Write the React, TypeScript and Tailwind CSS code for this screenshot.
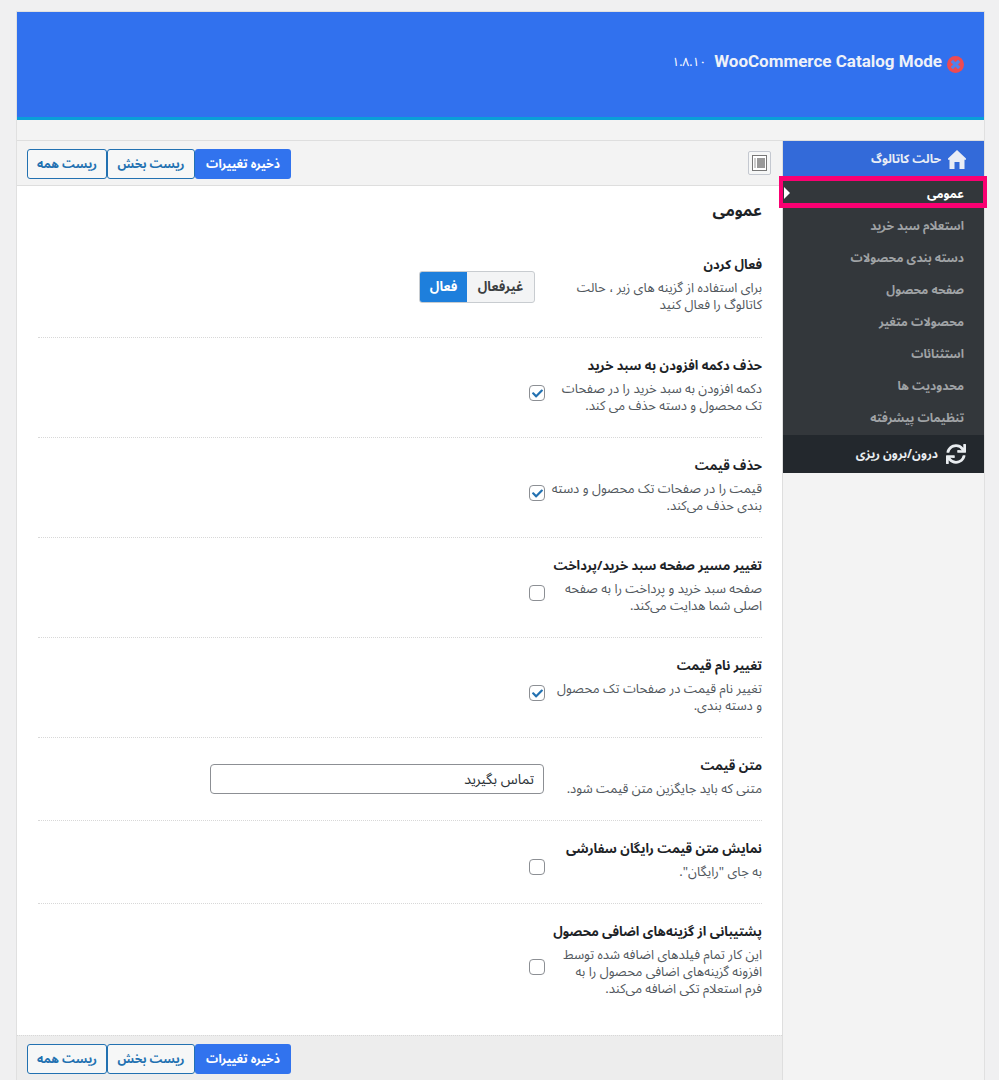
import { FaSync, FaCheck } from "react-icons/fa";

const font = "font-['Noto_Sans','Noto_Sans_Arabic','DejaVu_Sans',sans-serif]";

const menuItems = [
  "استعلام سبد خرید",
  "دسته بندی محصولات",
  "صفحه محصول",
  "محصولات متغیر",
  "استثنائات",
  "محدودیت ها",
  "تنظیمات پیشرفته",
];

const Buttons = () => (
  <div className="flex flex-row-reverse">
    <button className="h-[30px] w-[80px] rounded-[3px] border border-[#2271b1] bg-[#f6f7f7] text-[12px] font-bold text-[#2271b1]">
      ریست همه
    </button>
    <button className="h-[30px] w-[88px] rounded-[3px] border border-[#2271b1] bg-[#f6f7f7] text-[12px] font-bold text-[#2271b1]">
      ریست بخش
    </button>
    <button className="h-[30px] w-[96px] rounded-[3px] bg-[#3173ee] text-[12px] font-bold text-white">
      ذخیره تغییرات
    </button>
  </div>
);

const Check = ({ checked, top }: { checked?: boolean; top: string }) => (
  <div className={`${top} flex h-4 w-4 items-center justify-center rounded-[4px] border border-[#8c8f94] bg-white`}>
    {checked && <FaCheck className="text-[11px] text-[#2271b1]" />}
  </div>
);

const Row = ({
  title,
  desc,
  height,
  children,
}: {
  title: string;
  desc: string[];
  height: string;
  children?: React.ReactNode;
}) => (
  <div className={`${height} flex border-b border-dotted border-[#d8d8d8] pt-[15px] last:border-b-0`}>
    <div className="w-[217px] shrink-0">
      <h4 className="whitespace-nowrap text-[13px] font-bold leading-6 text-[#1d2327]">{title}</h4>
      <p className="mt-[3px] text-[13px] leading-[17px] text-[#51575d]">
        {desc.map((d) => (
          <span key={d} className="block whitespace-nowrap">
            {d}
          </span>
        ))}
      </p>
    </div>
    {children}
  </div>
);

export default function App() {
  return (
    <div dir="rtl" className={`${font} h-[1080px] overflow-hidden bg-[#f0f0f1] pl-4 pr-[14px] pt-[11px]`}>
      <div className="border border-[#e0e0e0] bg-[#f3f3f3]">
        <div className="flex h-[108px] items-center border-b-[3px] border-[#0a9fd8] bg-[#3171ee] pb-[6px] pr-[20px] text-white">
          <svg viewBox="0 0 16 16" className="mt-[6px] h-[17px] w-[17px] shrink-0">
            <circle cx="8" cy="8" r="8" fill="#ee4a52" />
            <path d="M4.500 4.500l7 7M11.500 4.500l-7 7" stroke="#4f83ee" strokeWidth="3" />
          </svg>
          <span dir="ltr" className="mr-[5px] font-['Roboto',sans-serif] text-[17px] font-bold text-[#eef1f8]">
            WooCommerce Catalog Mode
          </span>
          <span className="mr-[8px] text-[12px]">۱.۸.۱۰</span>
        </div>
        <div className="h-[21px] border-b border-[#dedede]" />
        <div className="flex">
          <aside className="w-[201px] shrink-0 bg-[#f3f3f3]">
            <div className="flex h-[36px] items-center gap-[7px] bg-[#336ad9] pr-[18px] text-[12px] font-bold text-[#e9edf5]">
              <svg viewBox="0 0 18 19" className="h-[19px] w-[18px] fill-current">
                <path d="M9 0l9 8.500v1.300h-1.500V19h-5v-7h-5v7h-5V9.800H0V8.500z" />
              </svg>
              حالت کاتالوگ
            </div>
            <div className="bg-[#33373b] pb-[2px]">
              <div className="relative flex h-[32px] items-center pr-[20px] pt-[2px] text-[12px] font-bold text-white">
                عمومی
                <span className="absolute left-[1px] top-[10px] h-0 w-0 border-y-[6px] border-l-[6px] border-y-transparent border-l-white" />
                <span className="absolute -left-[4px] -right-[3px] -top-px h-[32px] border-x-4 border-y-[5px] border-[#fa0072]" />
              </div>
              {menuItems.map((item) => (
                <div key={item} className="flex h-[32px] items-center pr-[20px] pt-[2px] text-[12px] font-bold text-[#a0a3a6]">
                  {item}
                </div>
              ))}
            </div>
            <div className="flex h-[38px] items-center gap-[8px] bg-[#23282d] pr-[18px] text-[12px] font-bold text-[#e9edf0]">
              <FaSync className="text-[20px]" />
              درون/برون ریزی
            </div>
          </aside>
          <main className="min-w-0 flex-1 border-r border-[#dedede] bg-white">
            <div className="flex h-[45px] items-start justify-between border-b border-[#dedede] bg-[#f3f3f3] pl-[10px] pr-[11px] pt-[8px]">
              <div className="mt-[2px] flex h-[24px] w-[23px] items-center justify-center rounded-[2px] border border-[#c4c8d0] bg-[#f6f7f7]">
                <div className="flex h-[16px] w-[15px] flex-row-reverse gap-px border border-[#777] bg-white px-px pb-[2px] pt-[2px]">
                  <div className="w-[2px] bg-[#ccc]" />
                  <div className="flex-1 bg-[#999]" />
                </div>
              </div>
              <Buttons />
            </div>
            <div className="h-[849px] pl-[21px] pr-[20px]">
              <h3 className="pt-[12px] text-[16px] font-bold leading-6 text-[#1d2327]">عمومی</h3>
              <div className="mt-[15px]">
                <Row
                  height="h-[101px]"
                  title="فعال کردن"
                  desc={["برای استفاده از گزینه های زیر ، حالت", "کاتالوگ را فعال کنید"]}
                >
                  <div className="mr-[10px] mt-[19px] flex h-[32px] w-[116px] overflow-hidden rounded-[3px] border border-[#c8ccd0] bg-[#f3f4f5] text-[13px] font-bold">
                    <div className="flex w-[67px] items-center justify-center text-[#3a3d40]">غیرفعال</div>
                    <div className="flex flex-1 items-center justify-center bg-[#1e7fdc] text-white">فعال</div>
                  </div>
                </Row>
                <Row
                  height="h-[100px]"
                  title="حذف دکمه افزودن به سبد خرید"
                  desc={["دکمه افزودن به سبد خرید را در صفحات", "تک محصول و دسته حذف می کند."]}
                >
                  <Check checked top="mt-[32px]" />
                </Row>
                <Row
                  height="h-[100px]"
                  title="حذف قیمت"
                  desc={["قیمت را در صفحات تک محصول و دسته", "بندی حذف می‌کند."]}
                >
                  <Check checked top="mt-[32px]" />
                </Row>
                <Row
                  height="h-[100px]"
                  title="تغییر مسیر صفحه سبد خرید/پرداخت"
                  desc={["صفحه سبد خرید و پرداخت را به صفحه", "اصلی شما هدایت می‌کند."]}
                >
                  <Check top="mt-[32px]" />
                </Row>
                <Row
                  height="h-[100px]"
                  title="تغییر نام قیمت"
                  desc={["تغییر نام قیمت در صفحات تک محصول", "و دسته بندی."]}
                >
                  <Check checked top="mt-[32px]" />
                </Row>
                <Row height="h-[83px]" title="متن قیمت" desc={["متنی که باید جایگزین متن قیمت شود."]}>
                  <input
                    readOnly
                    value="تماس بگیرید"
                    className="mr-px mt-[11px] h-[30px] w-[334px] rounded-[4px] border border-[#8c8f94] bg-white px-[9px] text-[14px] text-[#2c3338]"
                  />
                </Row>
                <Row height="h-[83px]" title="نمایش متن قیمت رایگان سفارشی" desc={['به جای "رایگان".']}>
                  <Check top="mt-[23px]" />
                </Row>
                <Row
                  height="h-[130px]"
                  title="پشتیبانی از گزینه‌های اضافی محصول"
                  desc={[
                    "این کار تمام فیلدهای اضافه شده توسط",
                    "افزونه گزینه‌های اضافی محصول را به",
                    "فرم استعلام تکی اضافه می‌کند.",
                  ]}
                >
                  <Check top="mt-[40px]" />
                </Row>
              </div>
            </div>
            <div className="flex h-[60px] justify-end border-t border-dotted border-[#d8d8d8] bg-[#ededed] pl-[10px] pt-[8px]">
              <Buttons />
            </div>
          </main>
        </div>
      </div>
    </div>
  );
}
